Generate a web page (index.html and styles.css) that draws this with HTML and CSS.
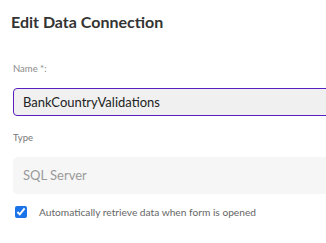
FILE: index.html
```html
<!DOCTYPE html>
<html lang="en">
<head>
    <meta charset="UTF-8">
    <title>Edit Data Connection</title>
    <link rel="stylesheet" href="styles.css">
</head>
<body>
    <div class="dialog">
        <h1>Edit Data Connection</h1>
        <form class="form">
            <label for="name" class="field-label">Name *:</label>
            <input type="text" id="name" class="name-input" value="BankCountryValidations">
            <label class="field-label type-label">Type</label>
            <div class="type-box">SQL Server</div>
            <label class="check-row">
                <input type="checkbox" checked>
                <span>Automatically retrieve data when form is opened</span>
            </label>
        </form>
    </div>
</body>
</html>
```

FILE: styles.css
```css
body { margin: 0; font-family: Lato, "Noto Sans", sans-serif; background: #fff; }
.dialog { padding: 12px 0 0 11px; width: 326px; height: 243px; box-sizing: border-box; overflow: hidden; }
h1 { margin: 0; font-size: 16px; font-weight: bold; color: #333; line-height: 20px; }
.form { display: flex; flex-direction: column; margin-top: 31px; padding-left: 2px; width: 340px; }
.field-label { font-size: 9.5px; color: #8a8a8a; line-height: 12px; }
.name-input { margin-top: 13px; height: 28px; box-sizing: border-box; border: 1.5px solid #5a1fc2; border-radius: 4px; background: #f0f0f0; font-family: Lato, sans-serif; font-size: 13px; color: #222; padding: 0 9px; outline: none; }
.type-label { margin-top: 16px; color: #777; }
.type-box { margin-top: 13px; height: 37px; background: #f6f6f6; border-radius: 5px; font-size: 13px; color: #9a9a9a; line-height: 37px; padding-left: 10px; }
.check-row { display: flex; align-items: center; gap: 12px; margin-top: 12px; font-size: 10.2px; color: #666; padding-left: 2px; }
.check-row input { margin: 0; width: 12px; height: 12px; accent-color: #1a73e8; }
```
